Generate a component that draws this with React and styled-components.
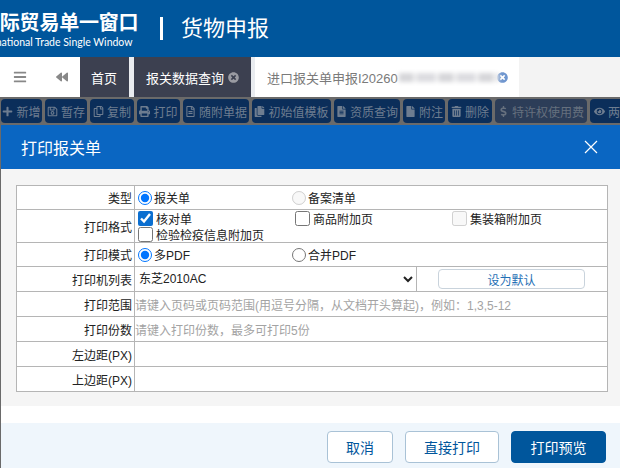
import React from 'react';
import styled, { createGlobalStyle } from 'styled-components';
import {
  FaPlus, FaRegSave, FaRegCopy, FaPrint, FaRegFileAlt, FaCopy, FaFileAlt, FaFile,
  FaTrashAlt, FaDollarSign, FaEye, FaBars, FaBackward, FaTimesCircle,
} from 'react-icons/fa';

const GlobalStyle = createGlobalStyle`
  html, body {
    margin: 0;
    padding: 0;
    background: #6a6a6a;
    font-family: "Liberation Sans", "Noto Sans CJK SC", sans-serif;
  }
`;

const Page = styled.div`
  width: 620px;
  height: 468px;
  overflow: hidden;
  display: flex;
  flex-direction: column;
`;

const Header = styled.header`
  height: 57px;
  flex: none;
  display: flex;
  align-items: center;
  background: #00569c;
  color: #fff;
  overflow: hidden;
`;

const Logo = styled.div`
  margin-left: -20px;
  padding-top: 3px;
  width: 178px;
  flex: none;
  white-space: nowrap;
`;

const LogoName = styled.div`
  font-size: 20px;
  line-height: 24px;
  font-weight: 700;
  letter-spacing: -0.2px;
`;

const LogoSub = styled.div`
  margin-left: -6px;
  font-family: "Lato", sans-serif;
  font-size: 10.5px;
  line-height: 14px;
`;

const Divider = styled.span`
  width: 3px;
  height: 23px;
  margin: 0 18px 0 2px;
  background: #fff;
`;

const AppTitle = styled.div`
  padding-bottom: 5px;
  font-size: 22px;
  font-weight: 400;
`;

const TabBar = styled.nav`
  height: 40px;
  flex: none;
  display: flex;
  background: #f3f3f3;
`;

const TabTools = styled.div`
  width: 80px;
  display: flex;
  align-items: center;
  gap: 29px;
  padding-left: 13px;
  box-sizing: border-box;
  background: #fff;
  color: #888;
  font-size: 12px;

  svg:first-child {
    font-size: 14px;
  }
`;

const Tab = styled.div`
  display: flex;
  align-items: center;
  box-sizing: border-box;
  width: ${p => p.$width}px;
  padding-left: ${p => p.$pad}px;
  background: ${p => (p.$active ? '#fff' : '#3c4050')};
  color: ${p => (p.$active ? '#7a7a7a' : '#fff')};
  font-size: 13px;
  white-space: nowrap;
`;

const TabGap = styled.span`
  width: ${p => p.$width}px;
  background: #e9ecf0;
`;

const TabClose = styled.span`
  display: flex;
  margin-left: ${p => p.$left}px;
  color: ${p => p.$color};
  font-size: 11px;
`;

const Blurred = styled.span`
  width: 100px;
  height: 9px;
  margin-left: 1px;
  background: repeating-linear-gradient(90deg, #d6d6d9 0 14px, #efeff0 14px 18px, #dcdce0 18px 36px, #f0f0f1 36px 40px);
  filter: blur(2px);
`;

const Toolbar = styled.div`
  height: 28px;
  flex: none;
  display: flex;
  align-items: center;
  gap: 3px;
  padding-left: 1px;
  background: #6a6a6a;
  overflow: hidden;
`;

const ToolButton = styled.div`
  height: 24px;
  flex: none;
  display: flex;
  align-items: center;
  justify-content: center;
  gap: 3px;
  width: ${p => p.$width}px;
  box-sizing: border-box;
  border-radius: 4px;
  background: ${p => (p.$faded ? '#2c3d58' : '#0b2e5a')};
  color: ${p => (p.$faded ? '#66707e' : '#6e7d90')};
  font-size: 12px;
  white-space: nowrap;

  svg {
    flex: none;
    font-size: 11px;
  }
`;

const Modal = styled.section`
  flex: 1;
  margin-left: 1px;
  display: flex;
  flex-direction: column;
  background: #fff;
`;

const ModalHead = styled.div`
  height: 44px;
  flex: none;
  display: flex;
  align-items: center;
  justify-content: space-between;
  padding: 0 22px 0 20px;
  background: #0a66c2;
  color: #fff;
  font-size: 16px;
`;

const ModalBody = styled.div`
  height: 237px;
  flex: none;
  box-sizing: border-box;
  padding: 16px 15px 0;
  background: #f5f5f5;
`;

const Form = styled.div`
  width: 590px;
  border: 1px solid #b5b5b5;
  border-bottom: 0;
  background: #fff;
  color: #222;
  font-size: 12px;
`;

const Row = styled.div`
  display: grid;
  grid-template-columns: 118px 1fr;
  height: ${p => p.$height}px;
  box-sizing: border-box;
  border-bottom: 1px solid #b5b5b5;
`;

const Label = styled.div`
  display: flex;
  align-items: center;
  justify-content: flex-end;
  padding-right: 2px;
  border-right: 1px solid #b5b5b5;
  white-space: nowrap;
`;

const Cell = styled.div`
  min-width: 0;
  display: flex;
  align-items: center;
`;

const Options = styled.div`
  display: grid;
  grid-template-columns: ${p => p.$columns};
  align-items: center;
  padding-left: 3px;
  width: 100%;
`;

const Option = styled.label`
  display: flex;
  align-items: center;
  height: 16px;
  white-space: nowrap;
  color: #222;

  input[type='radio'] {
    width: 14px;
    height: 14px;
    margin: 0 2px 0 0;
    flex: none;
  }

  input[type='checkbox'] {
    width: 15px;
    height: 15px;
    margin: 0 3px 0 0;
    flex: none;
    accent-color: #0b6fd0;
  }
`;

const Hint = styled.span`
  color: #a3a3a3;
  white-space: nowrap;
`;

const PrinterCell = styled.div`
  display: grid;
  grid-template-columns: 282px 1fr;
  height: 100%;
`;

const PrinterSelect = styled.select`
  appearance: auto;
  height: 100%;
  border: 0;
  border-right: 1px solid #b5b5b5;
  outline: 0;
  padding: 0;
  background: #fff;
  color: #222;
  font: inherit;
`;

const DefaultWrap = styled.div`
  display: flex;
  align-items: center;
  padding-left: 21px;
`;

const DefaultButton = styled.button`
  width: 147px;
  height: 20px;
  padding: 0;
  border: 1px solid #c9d3dc;
  border-radius: 4px;
  background: #fff;
  color: #1f6fb5;
  font: inherit;
`;

const Spacer = styled.div`
  height: 17px;
  flex: none;
  background: #fff;
`;

const Footer = styled.footer`
  flex: 1;
  display: flex;
  justify-content: flex-end;
  align-items: flex-start;
  gap: 12px;
  padding: 8px 14px 0 0;
  background: #eff6fc;
`;

const FooterButton = styled.button`
  width: ${p => p.$width}px;
  height: 32px;
  padding: 0;
  border: 1px solid ${p => (p.$primary ? '#00569c' : '#a9c2d6')};
  border-radius: 4px;
  background: ${p => (p.$primary ? '#00569c' : '#fff')};
  color: ${p => (p.$primary ? '#fff' : '#00569c')};
  font-family: inherit;
  font-size: 14px;
`;

const tools = [
  { icon: FaPlus, text: '新增', width: 41 },
  { icon: FaRegSave, text: '暂存', width: 42 },
  { icon: FaRegCopy, text: '复制', width: 44 },
  { icon: FaPrint, text: '打印', width: 43 },
  { icon: FaRegFileAlt, text: '随附单据', width: 66 },
  { icon: FaCopy, text: '初始值模板', width: 79 },
  { icon: FaFileAlt, text: '资质查询', width: 66 },
  { icon: FaFile, text: '附注', width: 42 },
  { icon: FaTrashAlt, text: '删除', width: 44 },
  { icon: FaDollarSign, text: '特许权使用费', width: 92, faded: true },
  { icon: FaEye, text: '两步申报', width: 70 },
];

const CloseIcon = () => (
  <svg width="14" height="14" viewBox="0 0 14 14" fill="none" stroke="#fff" strokeWidth="1.2">
    <path d="M1 1l12 12M13 1L1 13" />
  </svg>
);

const App = () => (
  <Page>
    <GlobalStyle />
    <Header>
      <Logo>
        <LogoName>国际贸易单一窗口</LogoName>
        <LogoSub>International Trade Single Window</LogoSub>
      </Logo>
      <Divider />
      <AppTitle>货物申报</AppTitle>
    </Header>
    <TabBar>
      <TabTools>
        <FaBars />
        <FaBackward />
      </TabTools>
      <Tab $width={49} $pad={11}>首页</Tab>
      <TabGap $width={5} />
      <Tab $width={117} $pad={12}>
        报关数据查询
        <TabClose $left={4} $color="#9a9ba2"><FaTimesCircle /></TabClose>
      </Tab>
      <TabGap $width={4} />
      <Tab $width={264} $pad={12} $active>
        进口报关单申报I20260
        <Blurred />
        <TabClose $left={-2} $color="#6f96cf"><FaTimesCircle /></TabClose>
      </Tab>
    </TabBar>
    <Toolbar>
      {tools.map(({ icon: Icon, text, width, faded }) => (
        <ToolButton key={text} $width={width} $faded={faded}>
          <Icon />
          {text}
        </ToolButton>
      ))}
    </Toolbar>
    <Modal>
      <ModalHead>
        打印报关单
        <CloseIcon />
      </ModalHead>
      <ModalBody>
        <Form>
          <Row $height={24}>
            <Label>类型</Label>
            <Cell>
              <Options $columns="154px 1fr">
                <Option><input type="radio" name="type" defaultChecked />报关单</Option>
                <Option><input type="radio" name="type" disabled />备案清单</Option>
              </Options>
            </Cell>
          </Row>
          <Row $height={33}>
            <Label>打印格式</Label>
            <Cell>
              <Options $columns="157px 157px 1fr">
                <Option><input type="checkbox" defaultChecked />核对单</Option>
                <Option><input type="checkbox" />商品附加页</Option>
                <Option><input type="checkbox" disabled />集装箱附加页</Option>
                <Option><input type="checkbox" />检验检疫信息附加页</Option>
              </Options>
            </Cell>
          </Row>
          <Row $height={24}>
            <Label>打印模式</Label>
            <Cell>
              <Options $columns="154px 1fr">
                <Option><input type="radio" name="mode" defaultChecked />多PDF</Option>
                <Option><input type="radio" name="mode" />合并PDF</Option>
              </Options>
            </Cell>
          </Row>
          <Row $height={25}>
            <Label>打印机列表</Label>
            <PrinterCell>
              <PrinterSelect defaultValue="东芝2010AC">
                <option>东芝2010AC</option>
              </PrinterSelect>
              <DefaultWrap>
                <DefaultButton>设为默认</DefaultButton>
              </DefaultWrap>
            </PrinterCell>
          </Row>
          <Row $height={25}>
            <Label>打印范围</Label>
            <Cell><Hint>请键入页码或页码范围(用逗号分隔，从文档开头算起)，例如：1,3,5-12</Hint></Cell>
          </Row>
          <Row $height={25}>
            <Label>打印份数</Label>
            <Cell><Hint>请键入打印份数，最多可打印5份</Hint></Cell>
          </Row>
          <Row $height={25}>
            <Label>左边距(PX)</Label>
            <Cell />
          </Row>
          <Row $height={25}>
            <Label>上边距(PX)</Label>
            <Cell />
          </Row>
        </Form>
      </ModalBody>
      <Spacer />
      <Footer>
        <FooterButton $width={66}>取消</FooterButton>
        <FooterButton $width={94}>直接打印</FooterButton>
        <FooterButton $width={95} $primary>打印预览</FooterButton>
      </Footer>
    </Modal>
  </Page>
);

export default App;
